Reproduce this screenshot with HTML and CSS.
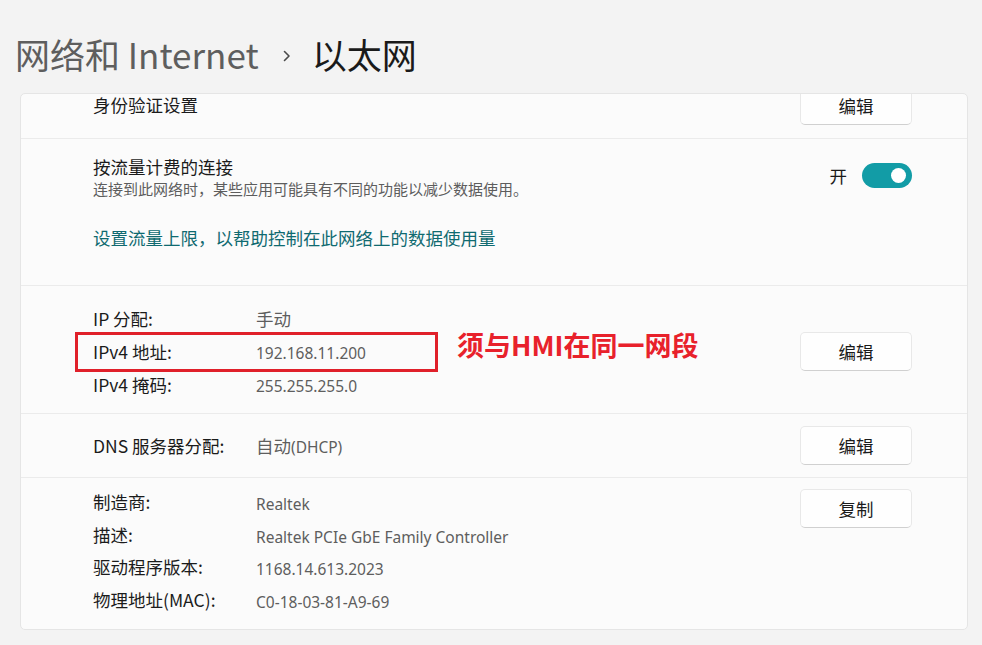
FILE: index.html
```html
<!DOCTYPE html>
<html lang="zh-CN">
<head>
    <meta charset="UTF-8">
    <meta name="viewport" content="width=device-width, initial-scale=1.0">
    <title>以太网</title>
    <link rel="stylesheet" href="styles.css">
</head>
<body>

    <header class="page-title">
        <span class="crumb">网络和 Internet</span>
        <svg class="chevron" width="12" height="16" viewBox="0 0 12 16"><path d="M3.5 3.5 L8 8 L3.5 12.5" fill="none" stroke="#4a4a4a" stroke-width="1.6" stroke-linecap="round" stroke-linejoin="round"/></svg>
        <span class="current">以太网</span>
    </header>

    <main class="card">
        <div class="scroller">
            <section class="row auth">
                <div class="label">身份验证设置</div>
                <button class="btn">编辑</button>
            </section>

            <section class="metered">
                <div class="metered-top">
                    <div>
                        <div class="label">按流量计费的连接</div>
                        <div class="desc">连接到此网络时，某些应用可能具有不同的功能以减少数据使用。</div>
                    </div>
                    <div class="switch">
                        <span>开</span>
                        <span class="toggle"><span class="knob"></span></span>
                    </div>
                </div>
                <a class="link" href="#">设置流量上限，以帮助控制在此网络上的数据使用量</a>
            </section>

            <section class="row ip">
                <div class="kv">
                    <div class="k">IP 分配:</div><div class="v"><span class="zh">手动</span></div>
                    <div class="k">IPv4 地址:</div><div class="v">192.168.11.200</div>
                    <div class="k">IPv4 掩码:</div><div class="v">255.255.255.0</div>
                </div>
                <button class="btn">编辑</button>
                <div class="highlight"></div>
                <div class="note">须与HMI在同一网段</div>
            </section>

            <section class="row dns">
                <div class="kv">
                    <div class="k">DNS 服务器分配:</div><div class="v"><span class="zh">自动</span>(DHCP)</div>
                </div>
                <button class="btn">编辑</button>
            </section>

            <section class="row details">
                <div class="kv">
                    <div class="k">制造商:</div><div class="v">Realtek</div>
                    <div class="k">描述:</div><div class="v">Realtek PCIe GbE Family Controller</div>
                    <div class="k">驱动程序版本:</div><div class="v">1168.14.613.2023</div>
                    <div class="k">物理地址(MAC):</div><div class="v">C0-18-03-81-A9-69</div>
                </div>
                <button class="btn">复制</button>
            </section>
        </div>
    </main>

</body>
</html>
```

FILE: styles.css
```css
body {
    margin: 0;
    background: #f3f3f3;
    font-family: "Noto Sans CJK SC", sans-serif;
    color: #1b1b1b;
    font-size: 17.5px;
}

.page-title {
    height: 93px;
    box-sizing: border-box;
    padding: 30px 0 0 15px;
    font-size: 35px;
    line-height: 48px;
    display: flex;
    align-items: flex-start;
}

.crumb { color: #5e5e5e; }
.current { color: #1a1a1a; }

.chevron {
    margin: 18px 19px 0 22px;
}

.card {
    margin: 0 14px 0 20px;
    background: #fbfbfb;
    border: 1px solid #e5e5e5;
    border-radius: 5px;
    overflow: hidden;
}

.scroller { margin-top: -22px; }

.row {
    display: flex;
    align-items: center;
    justify-content: space-between;
    padding: 0 55px 0 72px;
    position: relative;
}

.row + .row, .metered, .metered + .row {
    border-top: 1px solid #ebebeb;
}

.auth { height: 66px; }

.btn {
    width: 112px;
    height: 39px;
    font-family: inherit;
    font-size: 17.5px;
    color: #1b1b1b;
    background: #fefefe;
    border: 1px solid #e8e8e8;
    border-bottom-color: #d0d0d0;
    border-radius: 5px;
    padding: 0;
}

.metered {
    padding: 16px 55px 35px 72px;
}

.metered-top {
    display: flex;
    align-items: center;
    justify-content: space-between;
}

.label { line-height: 24px; }

.desc {
    font-size: 15px;
    line-height: 20px;
    color: #5d5d5d;
}

.switch {
    display: flex;
    align-items: center;
    gap: 15px;
    margin-bottom: 4px;
}

.toggle {
    width: 50px;
    height: 25px;
    border-radius: 13px;
    background: #129ca6;
    display: flex;
    align-items: center;
    justify-content: flex-end;
}

.knob {
    width: 15px;
    height: 15px;
    border-radius: 50%;
    background: #fff;
    margin-right: 6px;
}

.link {
    display: block;
    margin-top: 27px;
    line-height: 24px;
    color: #0f6a70;
    text-decoration: none;
}

.kv {
    display: grid;
    grid-template-columns: 163px auto;
    grid-auto-rows: 33px;
    line-height: 33px;
}

.v {
    color: #5e5e5e;
    font-family: "Noto Sans", "Noto Sans CJK SC", sans-serif;
    font-size: 15.5px;
    padding-top: 2px;
}

.v .zh {
    font-family: "Noto Sans CJK SC", sans-serif;
    font-size: 17.5px;
    line-height: 1;
}

.ip { padding-top: 16px; padding-bottom: 12px; }
.dns { padding-top: 12px; padding-bottom: 12px; }

.details {
    align-items: flex-start;
    padding-top: 8px;
    padding-bottom: 13px;
}
.details .kv { grid-auto-rows: 32.5px; line-height: 32.5px; }
.details .btn { margin-top: 3px; }

/* annotation drawn over the screenshot */
.highlight {
    position: absolute;
    left: 54px;
    top: 46px;
    width: 363px;
    height: 40px;
    box-sizing: border-box;
    border: 3px solid #e0202a;
}

.note {
    position: absolute;
    left: 436px;
    top: 43px;
    font-size: 27px;
    line-height: 32px;
    font-weight: bold;
    color: #e8212b;
}
```
